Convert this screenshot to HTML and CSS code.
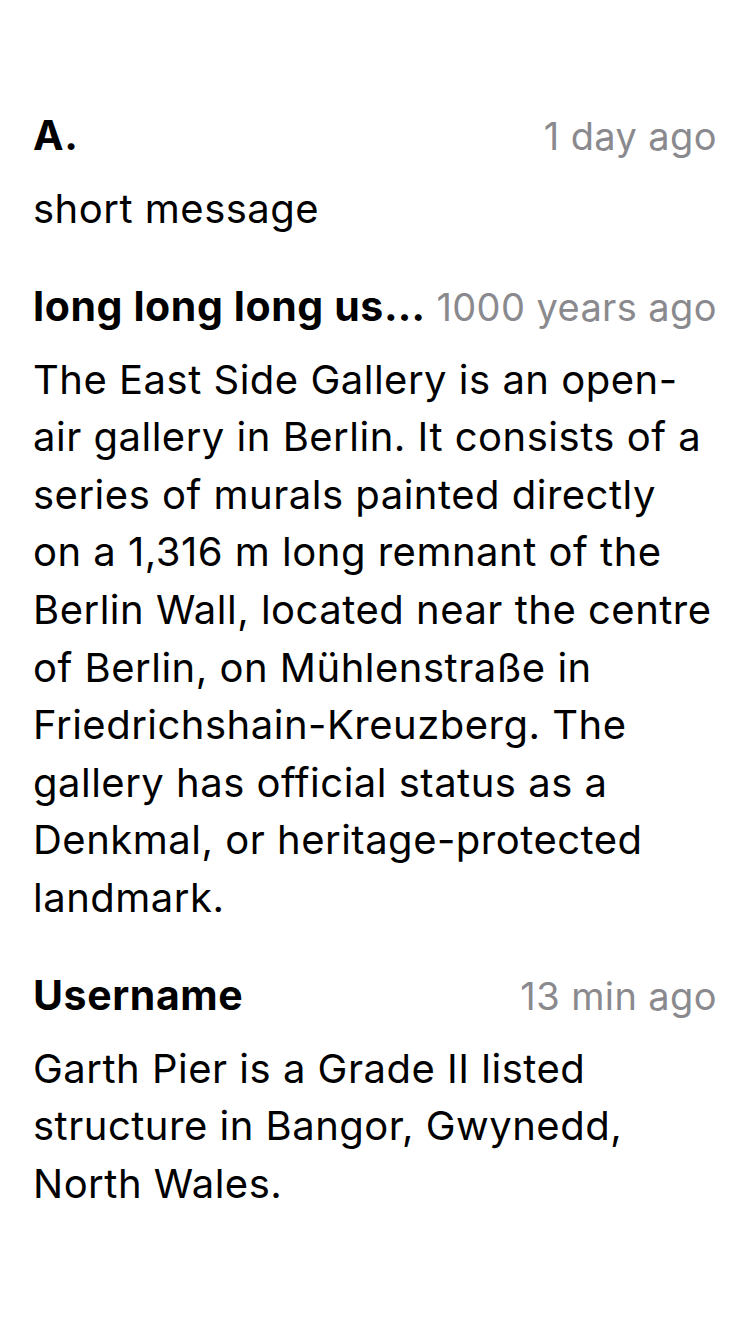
FILE: index.html
```html
<!DOCTYPE html>
<html lang="en">
<head>
<meta charset="utf-8">
<title>Messages</title>
<link rel="stylesheet" href="styles.css">
</head>
<body>
<main class="list">
  <article class="item">
    <header class="head">
      <span class="name">A.</span>
      <span class="time">1 day ago</span>
    </header>
    <p class="body">short message</p>
  </article>
  <article class="item">
    <header class="head">
      <span class="name">long long long username here</span>
      <span class="time">1000 years ago</span>
    </header>
    <p class="body">The East Side Gallery is an open-<br>air gallery in Berlin. It consists of a<br>series of murals painted directly<br>on a 1,316&nbsp;m long remnant of the<br>Berlin Wall, located near the centre<br>of Berlin, on Mühlenstraße in<br>Friedrichshain-Kreuzberg. The<br>gallery has official status as a<br>Denkmal, or heritage-protected<br>landmark.</p>
  </article>
  <article class="item">
    <header class="head">
      <span class="name">Username</span>
      <span class="time">13 min ago</span>
    </header>
    <p class="body">Garth Pier is a Grade II listed<br>structure in Bangor, Gwynedd,<br>North Wales.</p>
  </article>
</main>
</body>
</html>
```
FILE: styles.css
```css
html, body {
  margin: 0;
  padding: 0;
  background: #ffffff;
}
body {
  font-family: Inter, "Liberation Sans", sans-serif;
  color: #000000;
  width: 750px;
}
.list {
  display: flex;
  flex-direction: column;
  gap: 42px;
  padding: 109px 33px 0 33px;
}
.item {
  display: flex;
  flex-direction: column;
  gap: 18px;
}
.head {
  display: flex;
  align-items: baseline;
  gap: 10px;
  line-height: 52px;
}
.name {
  font-size: 41px;
  font-weight: 700;
  letter-spacing: 0.6px;
  min-width: 0;
  flex: 0 1 auto;
  white-space: nowrap;
  overflow: hidden;
  text-overflow: ellipsis;
}
.time {
  font-size: 38px;
  letter-spacing: 0.4px;
  margin-left: auto;
  flex: 0 0 auto;
  color: #8a8a8e;
  white-space: nowrap;
}
.body {
  margin: 0;
  font-size: 40px;
  letter-spacing: 0.5px;
  line-height: 57.6px;
}
```
